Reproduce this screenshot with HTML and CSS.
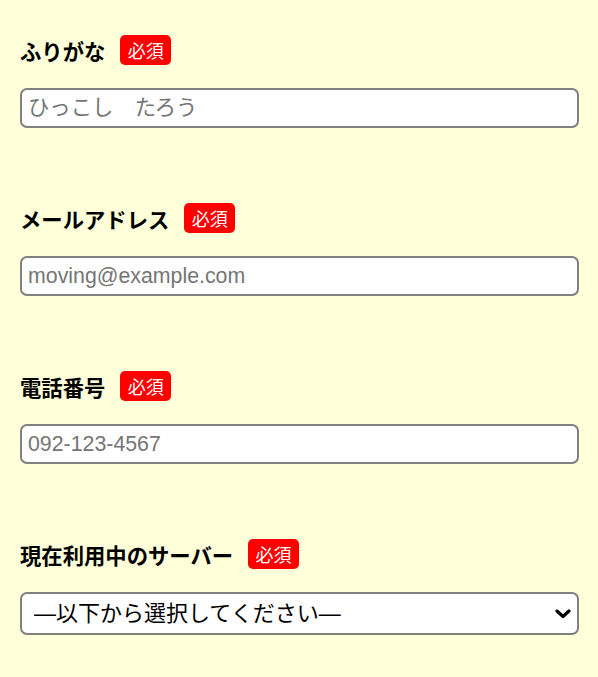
FILE: index.html
```html
<!DOCTYPE html>
<html lang="ja">
<head>
<meta charset="utf-8">
<link rel="stylesheet" href="styles.css">
</head>
<body>
<form class="form">
  <div class="group">
    <div class="label-row"><span class="label">ふりがな</span><span class="badge">必須</span></div>
    <input class="field" type="text" placeholder="ひっこし　たろう">
  </div>
  <div class="group">
    <div class="label-row"><span class="label">メールアドレス</span><span class="badge">必須</span></div>
    <input class="field" type="text" placeholder="moving@example.com">
  </div>
  <div class="group">
    <div class="label-row"><span class="label">電話番号</span><span class="badge">必須</span></div>
    <input class="field" type="text" placeholder="092-123-4567">
  </div>
  <div class="group">
    <div class="label-row"><span class="label">現在利用中のサーバー</span><span class="badge">必須</span></div>
    <select class="field select">
      <option>―以下から選択してください―</option>
    </select>
  </div>
</form>
</body>
</html>
```

FILE: styles.css
```css
html, body {
  margin: 0;
  padding: 0;
  background: #ffffd9;
}
body {
  font-family: "Liberation Sans", "Noto Sans CJK JP", sans-serif;
}
.form {
  padding: 35px 19px 0 20px;
  display: flex;
  flex-direction: column;
  gap: 75px;
}
.group {
  display: flex;
  flex-direction: column;
  gap: 23px;
}
.label-row {
  display: flex;
  align-items: center;
  gap: 15px;
  height: 30px;
}
.label {
  font-family: "Noto Sans CJK JP", sans-serif;
  font-weight: bold;
  font-size: 21.33px;
  color: #000;
}
.badge {
  background: #ff0000;
  color: #fff;
  font-family: "Noto Sans CJK JP", sans-serif;
  font-size: 18px;
  height: 30px;
  line-height: 30px;
  padding: 0 7.5px;
  border-radius: 5px;
  box-sizing: border-box;
}
.field {
  box-sizing: border-box;
  width: 100%;
  height: 40px;
  margin: 0;
  border: 2px solid #808080;
  border-radius: 7px;
  background: #fff;
  padding: 0 6px;
  font-family: "Liberation Sans", "Noto Sans CJK JP", sans-serif;
  font-size: 21.33px;
  color: #000;
}
.field::placeholder {
  color: #757575;
}
.select {
  height: 43px;
  padding: 0 30px 0 12px;
  font-size: 22px;
  -webkit-appearance: none;
  appearance: none;
  background-image: url("data:image/svg+xml,%3Csvg xmlns='http://www.w3.org/2000/svg' width='16' height='10' viewBox='0 0 16 10'%3E%3Cpath d='M2 2 L8 7.5 L14 2' fill='none' stroke='%23000' stroke-width='3.2' stroke-linecap='round' stroke-linejoin='round'/%3E%3C/svg%3E");
  background-repeat: no-repeat;
  background-position: right 6px center;
  background-size: 16px 10px;
}
```
